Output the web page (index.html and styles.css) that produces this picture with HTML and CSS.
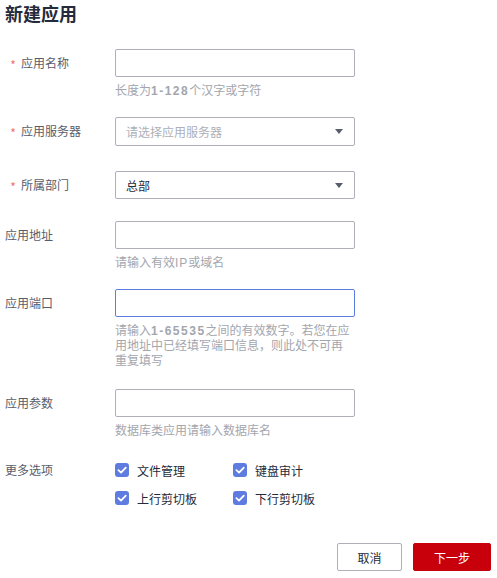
FILE: index.html
```html
<!DOCTYPE html>
<html lang="zh-CN">
<head>
<meta charset="utf-8">
<title>新建应用</title>
<link rel="stylesheet" href="styles.css">
</head>
<body>
<div class="page">
  <h1 class="title">新建应用</h1>
  <form class="form">
    <div class="row r1">
      <label class="label"><span class="req">*</span>应用名称</label>
      <div class="control">
        <div class="input"></div>
        <div class="hint">长度为<span class="num">1-128</span>个汉字或字符</div>
      </div>
    </div>
    <div class="row r2">
      <label class="label"><span class="req">*</span>应用服务器</label>
      <div class="control">
        <div class="input select tall"><span class="placeholder">请选择应用服务器</span><span class="caret"></span></div>
      </div>
    </div>
    <div class="row r3">
      <label class="label"><span class="req">*</span>所属部门</label>
      <div class="control">
        <div class="input select"><span class="value">总部</span><span class="caret"></span></div>
      </div>
    </div>
    <div class="row r4">
      <label class="label">应用地址</label>
      <div class="control">
        <div class="input"></div>
        <div class="hint">请输入有效<span class="latin">IP</span>或域名</div>
      </div>
    </div>
    <div class="row r5">
      <label class="label">应用端口</label>
      <div class="control">
        <div class="input focused"></div>
        <div class="hint">请输入<span class="num">1-65535</span>之间的有效数字。若您在应用地址中已经填写端口信息，则此处不可再重复填写</div>
      </div>
    </div>
    <div class="row r6">
      <label class="label">应用参数</label>
      <div class="control">
        <div class="input"></div>
        <div class="hint">数据库类应用请输入数据库名</div>
      </div>
    </div>
    <div class="row r7">
      <label class="label label-check">更多选项</label>
      <div class="checks">
        <div class="check"><span class="box"><svg viewBox="0 0 14 14" width="14" height="14"><path d="M3.4 7.2 L6 9.6 L10.8 4.6" fill="none" stroke="#fff" stroke-width="1.8" stroke-linecap="round" stroke-linejoin="round"/></svg></span>文件管理</div>
        <div class="check"><span class="box"><svg viewBox="0 0 14 14" width="14" height="14"><path d="M3.4 7.2 L6 9.6 L10.8 4.6" fill="none" stroke="#fff" stroke-width="1.8" stroke-linecap="round" stroke-linejoin="round"/></svg></span>键盘审计</div>
        <div class="check"><span class="box"><svg viewBox="0 0 14 14" width="14" height="14"><path d="M3.4 7.2 L6 9.6 L10.8 4.6" fill="none" stroke="#fff" stroke-width="1.8" stroke-linecap="round" stroke-linejoin="round"/></svg></span>上行剪切板</div>
        <div class="check"><span class="box"><svg viewBox="0 0 14 14" width="14" height="14"><path d="M3.4 7.2 L6 9.6 L10.8 4.6" fill="none" stroke="#fff" stroke-width="1.8" stroke-linecap="round" stroke-linejoin="round"/></svg></span>下行剪切板</div>
      </div>
    </div>
  </form>
  <div class="actions">
    <button type="button" class="btn btn-cancel">取消</button>
    <button type="button" class="btn btn-next">下一步</button>
  </div>
</div>
</body>
</html>
```
FILE: styles.css
```css
* { box-sizing: border-box; }
html, body { margin: 0; padding: 0; background: #fff; }
body {
  font-family: "Noto Sans CJK SC", "Noto Sans", sans-serif;
  font-size: 12px;
  color: #252b3a;
}
.page {
  width: 497px;
  padding: 0 6px 0 5px;
}
.title {
  margin: 0;
  font-size: 18px;
  line-height: 26px;
  font-weight: 700;
  color: #252b3a;
}
.form {
  display: flex;
  flex-direction: column;
  margin-top: 23px;
}
.row {
  display: grid;
  grid-template-columns: 110px 240px;
  align-items: start;
}
.r2 { margin-top: 20px; }
.r3 { margin-top: 25px; }
.r4 { margin-top: 22px; }
.r5 { margin-top: 20px; }
.r6 { margin-top: 22px; }
.r7 { margin-top: 23px; }
.label {
  display: flex;
  align-items: center;
  height: 28px;
  line-height: 28px;
  color: #575d6c;
  white-space: nowrap;
}
.label-check { height: 20px; line-height: 20px; }
.req {
  display: inline-block;
  width: 16px;
  text-align: center;
  color: #f66f6a;
  font-size: 12px;
  line-height: 28px;
  padding-top: 3px;
}
.control { display: flex; flex-direction: column; }
.input {
  height: 28px;
  border: 1px solid #adb0b8;
  border-radius: 2px;
  background: #fff;
}
.input.tall { height: 29px; }
.input.focused { border-color: #5e7ce0; }
.select {
  display: flex;
  align-items: center;
  justify-content: space-between;
  padding: 0 11px 0 10px;
}
.placeholder { color: #adb0b8; }
.value { color: #252b3a; }
.caret {
  width: 0;
  height: 0;
  border-left: 4.5px solid transparent;
  border-right: 4.5px solid transparent;
  border-top: 5px solid #575d6c;
}
.hint {
  margin-top: 5px;
  padding-right: 4px;
  line-height: 15px;
  color: #a3a6ae;
}
.num {
  font-family: "Liberation Sans", Arial, sans-serif;
  font-weight: 700;
  letter-spacing: 1.5px;
  line-height: 10px;
}
.latin {
  font-family: "Liberation Sans", Arial, sans-serif;
  letter-spacing: 1px;
  line-height: 10px;
}
.checks {
  display: grid;
  grid-template-columns: 118px 118px;
  row-gap: 8px;
}
.check {
  display: flex;
  align-items: center;
  gap: 8px;
  height: 20px;
  color: #252b3a;
  white-space: nowrap;
}
.box {
  display: block;
  width: 14px;
  height: 14px;
  border-radius: 3px;
  background: #5e7ce0;
}
.box svg { display: block; }
.actions {
  display: flex;
  justify-content: flex-end;
  gap: 11px;
  margin-top: 35px;
}
.btn {
  height: 28px;
  border-radius: 2px;
  font-family: inherit;
  font-size: 12px;
  padding: 0;
  cursor: pointer;
}
.btn-cancel {
  width: 65px;
  background: #fff;
  border: 1px solid #adb0b8;
  color: #252b3a;
}
.btn-next {
  width: 78px;
  background: #c7000b;
  border: 1px solid #c7000b;
  color: #fff;
}
```
